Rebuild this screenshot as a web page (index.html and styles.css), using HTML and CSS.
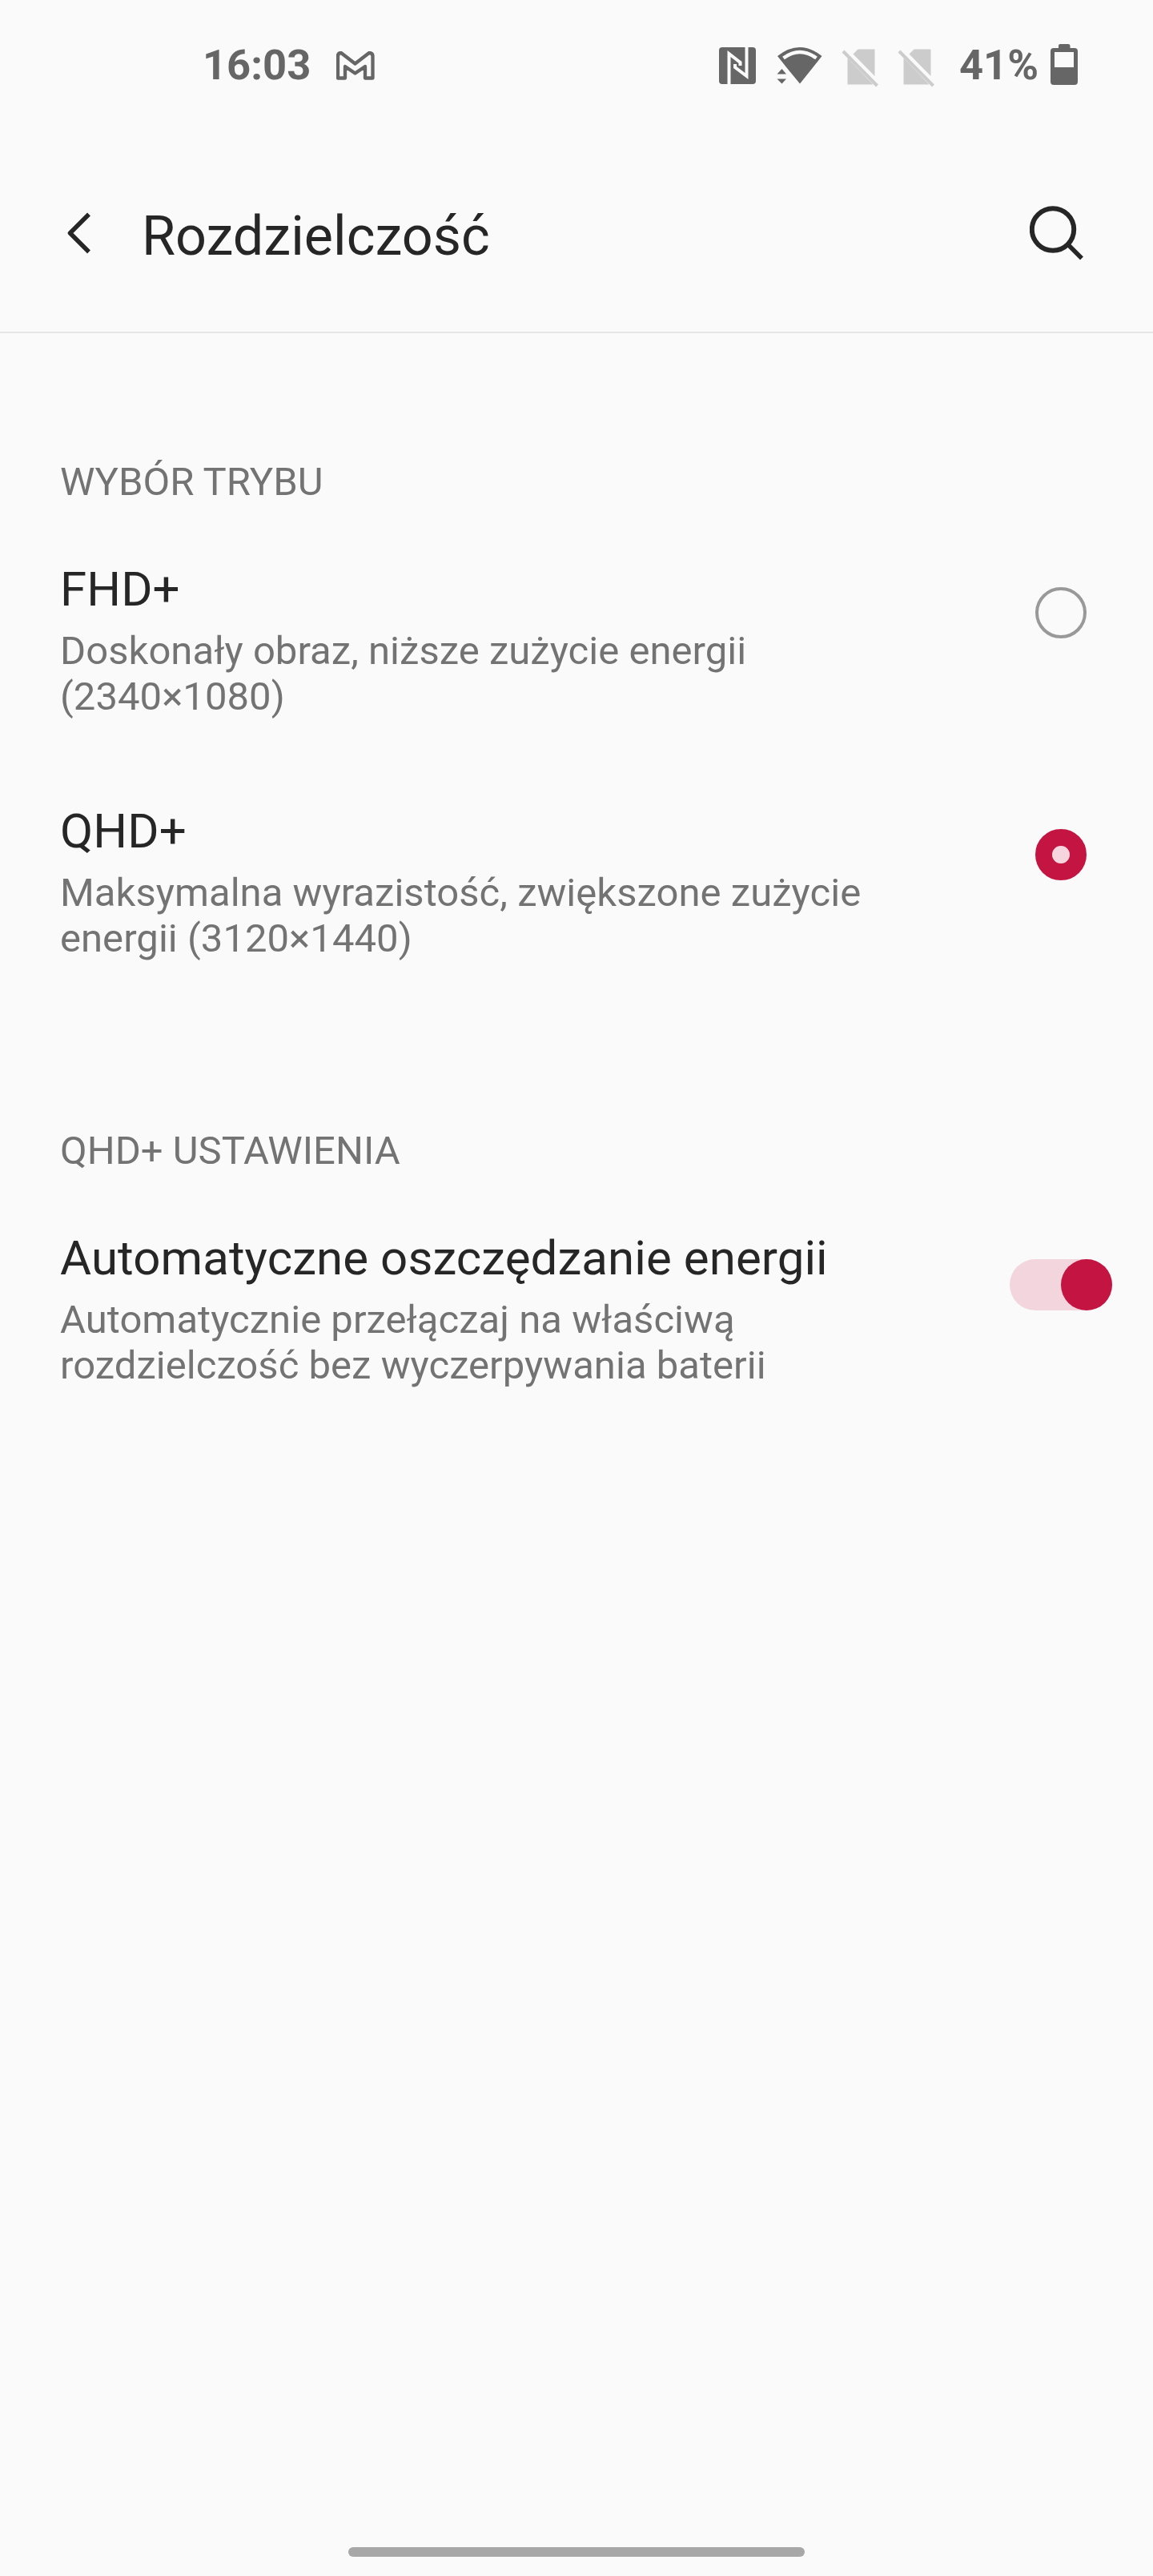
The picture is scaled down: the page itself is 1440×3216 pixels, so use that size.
FILE: index.html
```html
<!DOCTYPE html>
<html lang="pl">
<head>
    <meta charset="UTF-8">
    <meta name="viewport" content="width=device-width, initial-scale=1.0">
    <title>Rozdzielczość</title>
    <link rel="stylesheet" href="styles.css">
</head>
<body>
    <div class="status-bar">
        <div class="status-left">
            <span class="time">16:03</span>
            <svg class="icon-mail" width="48" height="36" viewBox="0 0 48 36">
                <path d="M2 33.500V6Q2 2 6 2L23.500 15.500L41 2Q45.500 2 45.500 6V33.500H36V19L23.500 27.500L11 19V33.500Z" fill="none" stroke="#666" stroke-width="4.300" stroke-linejoin="round"/>
            </svg>
        </div>
        <div class="status-right">
            <svg class="icon-nfc" width="46" height="46" viewBox="0 0 46 46">
                <rect width="46" height="46" rx="4" fill="#666"/>
                <path d="M12.500 46V8L26.500 19V23M34.500 0V36L20 25V21" fill="none" stroke="#fafafa" stroke-width="4"/>
            </svg>
            <svg class="icon-wifi" width="58" height="48" viewBox="0 0 58 48">
                <path d="M1 11Q28.500 -11 56.500 11L29 45.500L12.500 25.500Z" fill="#666"/>
                <path d="M8.500 13.500Q29 -1.500 49.500 13.500" fill="none" stroke="#fafafa" stroke-width="4.500"/>
                <path d="M0.500 33.500L6.500 27L12 33.500ZM0.500 39.500H12L6.500 45.500Z" fill="#666"/>
            </svg>
            <svg class="icon-sim" width="47" height="48" viewBox="0 0 47 48">
                <path d="M7.500 11.500L39.500 44.500H7.500ZM14.500 6.500L20.500 0.500H41.500V34Z" fill="#ccc"/>
                <path d="M2 3L44.500 46" stroke="#ccc" stroke-width="4"/>
            </svg>
            <svg class="icon-sim" width="47" height="48" viewBox="0 0 47 48">
                <path d="M7.500 11.500L39.500 44.500H7.500ZM14.500 6.500L20.500 0.500H41.500V34Z" fill="#ccc"/>
                <path d="M2 3L44.500 46" stroke="#ccc" stroke-width="4"/>
            </svg>
            <span class="percent">41%</span>
            <svg class="icon-battery" width="34" height="51" viewBox="0 0 34 51">
                <path d="M10 5V2Q10 0 12 0H22Q24.500 0 24.500 2V5H30Q34 5 34 9V47Q34 51 30 51H4Q0 51 0 47V9Q0 5 4 5Z" fill="#666"/>
                <rect x="5" y="10" width="24" height="19" fill="#fafafa"/>
            </svg>
        </div>
    </div>

    <header class="toolbar">
        <svg class="icon-back" width="30" height="52" viewBox="0 0 30 52">
            <path d="M27 2.500L3.500 26L27 49.500" fill="none" stroke="#262626" stroke-width="5.500" stroke-linejoin="round"/>
        </svg>
        <h1>Rozdzielczość</h1>
        <svg class="icon-search" width="68" height="68" viewBox="0 0 68 68">
            <circle cx="29" cy="29.500" r="26.200" fill="none" stroke="#262626" stroke-width="6"/>
            <path d="M48 48.500L65 65.500" stroke="#262626" stroke-width="5.500"/>
        </svg>
    </header>

    <main>
        <section>
            <h2>WYBÓR TRYBU</h2>
            <div class="row">
                <div class="text">
                    <h3>FHD+</h3>
                    <p>Doskonały obraz, niższe zużycie energii (2340×1080)</p>
                </div>
                <div class="radio"></div>
            </div>
            <div class="row">
                <div class="text">
                    <h3>QHD+</h3>
                    <p>Maksymalna wyrazistość, zwiększone zużycie energii (3120×1440)</p>
                </div>
                <div class="radio checked"></div>
            </div>
        </section>
        <section>
            <h2>QHD+ USTAWIENIA</h2>
            <div class="row">
                <div class="text">
                    <h3>Automatyczne oszczędzanie energii</h3>
                    <p>Automatycznie przełączaj na właściwą rozdzielczość bez wyczerpywania baterii</p>
                </div>
                <div class="switch"></div>
            </div>
        </section>
    </main>

    <div class="home-bar"></div>
</body>
</html>
```
FILE: styles.css
```css
* {
    box-sizing: border-box;
}

body {
    margin: 0;
    height: 3216px;
    display: flex;
    flex-direction: column;
    background-color: #fafafa;
    font-family: Roboto, sans-serif;
    color: #262626;
}

h1, h2, h3, p {
    margin: 0;
    font-weight: 400;
}

svg {
    display: block;
    flex-shrink: 0;
}

.status-bar {
    height: 164px;
    padding: 50px 94px 0 253px;
    display: flex;
    justify-content: space-between;
    align-items: flex-start;
    font-size: 52.5px;
    line-height: 62px;
    font-weight: 700;
    color: #666;
}

.status-left,
.status-right {
    display: flex;
    align-items: flex-start;
}

.icon-mail {
    margin: 14px 0 0 32px;
}

.icon-nfc {
    margin-top: 9px;
}

.icon-wifi {
    margin: 9px 0 0 26px;
}

.icon-sim {
    margin: 11px 0 0 23px;
}

.percent {
    margin-left: 30px;
}

.icon-battery {
    margin: 5px 0 0 15px;
}

.toolbar {
    height: 252px;
    padding: 90px 86px 0 84px;
    display: flex;
    align-items: flex-start;
    border-bottom: 2px solid #e6e6e6;
}

.icon-back {
    margin-top: 11px;
}

h1 {
    flex: 1;
    margin: 1px 0 0 63px;
    font-size: 68.3px;
    line-height: 80px;
}

.icon-search {
    margin-top: 3px;
}

main {
    flex: 1;
    padding: 157px 0 0 75px;
}

section {
    margin-bottom: 103px;
}

h2 {
    margin-bottom: 71px;
    font-size: 49px;
    line-height: 57px;
    color: #737373;
}

.row {
    height: 302px;
    display: flex;
    justify-content: space-between;
    align-items: flex-start;
}

.text {
    width: 1060px;
}

h3 {
    margin-bottom: 13px;
    font-size: 60px;
    line-height: 70px;
    letter-spacing: 0.08px;
}

p {
    font-size: 49px;
    line-height: 57px;
    letter-spacing: 0.04px;
    color: #737373;
}

.radio {
    width: 64px;
    height: 64px;
    margin: 32px 83px 0 0;
    border: 4px solid #999;
    border-radius: 50%;
}

.radio.checked {
    border: 21px solid #c41442;
    background: #f6d5de content-box;
}

.switch {
    width: 128px;
    height: 64px;
    margin: 36px 51px 0 0;
    display: flex;
    justify-content: flex-end;
    border-radius: 32px;
    background-color: #f3d5dd;
}

.switch::after {
    content: "";
    width: 64px;
    border-radius: 50%;
    background-color: #c41442;
}

.home-bar {
    width: 570px;
    height: 12px;
    margin: 0 auto 24px;
    border-radius: 6px;
    background-color: #a7a7a7;
}
```
